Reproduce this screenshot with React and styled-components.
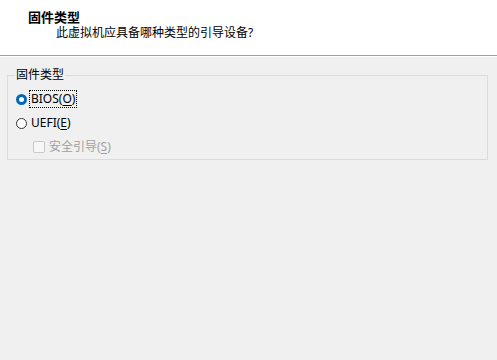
import styled, { createGlobalStyle } from 'styled-components';

const Global = createGlobalStyle`
  html, body { margin: 0; padding: 0; }
  body {
    width: 497px;
    height: 360px;
    overflow: hidden;
    background: #f0f0f0;
    font-family: "Noto Sans", "Noto Sans CJK SC", sans-serif;
    font-size: 12px;
    color: #000;
  }
`;

const Page = styled.div`
  display: flex;
  flex-direction: column;
  height: 360px;
`;

const Header = styled.header`
  background: #fff;
  height: 56px;
  border-bottom: 1px solid #a0a0a0;
  padding: 9px 0 0 28px;
  box-sizing: border-box;
`;

const Title = styled.h1`
  margin: 0;
  font-size: 13px;
  font-weight: bold;
  line-height: 16px;
`;

const Subtitle = styled.p`
  margin: 0;
  padding-left: 28px;
  line-height: 16px;
`;

const Body = styled.main`
  border-top: 1px solid #fff;
  padding: 10px 9px 0 7px;
`;

const Group = styled.fieldset`
  margin: 0;
  border: 1px solid #dcdcdc;
  padding: 6px 0 5px 8px;
  height: 93px;
  box-sizing: border-box;
  display: flex;
  flex-direction: column;
  gap: 4px;
`;

const Legend = styled.legend`
  padding: 0 1px;
  margin-left: -1px;
  line-height: 16px;
`;

const Option = styled.label`
  display: flex;
  align-items: center;
  flex: none;
  height: 20px;
  gap: 3px;
  color: ${({ disabled }) => (disabled ? '#a0a0a0' : '#000')};
  padding-left: ${({ indent }) => indent || 0}px;
`;

const Radio = styled.span`
  width: 11px;
  height: 11px;
  border-radius: 50%;
  box-sizing: border-box;
  border: ${({ checked }) => (checked ? '3px solid #0067c0' : '1px solid #333')};
  background: #fff;
`;

const Check = styled.span`
  width: 12px;
  height: 12px;
  border-radius: 2px;
  box-sizing: border-box;
  border: 1px solid #c8c8c8;
  background: #f7f7f7;
`;

const Text = styled.span`
  line-height: 16px;
  padding: 0 1px;
  outline: ${({ focused }) => (focused ? '1px dotted #000' : 'none')};
  u { text-underline-offset: 2px; }
`;

export default function App() {
  return (
    <Page>
      <Global />
      <Header>
        <Title>固件类型</Title>
        <Subtitle>此虚拟机应具备哪种类型的引导设备?</Subtitle>
      </Header>
      <Body>
        <Group>
          <Legend>固件类型</Legend>
          <Option>
            <Radio checked />
            <Text focused>BIOS(<u>O</u>)</Text>
          </Option>
          <Option>
            <Radio />
            <Text>UEFI(<u>E</u>)</Text>
          </Option>
          <Option disabled indent={17}>
            <Check />
            <Text>安全引导(<u>S</u>)</Text>
          </Option>
        </Group>
      </Body>
    </Page>
  );
}
